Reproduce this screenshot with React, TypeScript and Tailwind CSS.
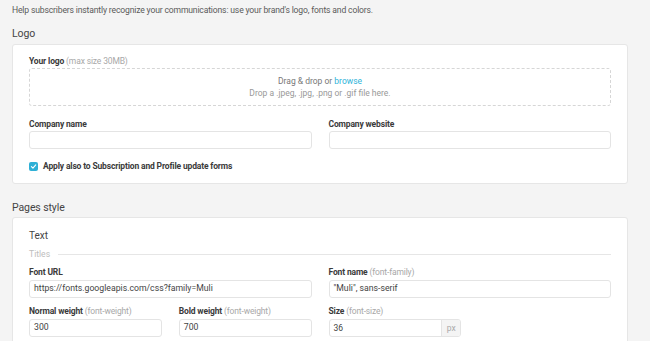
import React from "react";

const Label = ({ b, hint }: { b: string; hint?: string }) => (
  <div className="h-[10px] leading-[10px] text-[8.5px] tracking-[-0.15px] whitespace-nowrap">
    <span className="font-bold text-[#3a3a3a]">{b}</span>
    {hint && <span className="text-[#a8a8a8]"> {hint}</span>}
  </div>
);

const Input = ({ value, className = "" }: { value?: string; className?: string }) => (
  <div
    className={`h-[18px] border border-[#e4e4e4] rounded-[3px] bg-white flex items-center px-[4px] text-[8.7px] text-[#444] ${className}`}
  >
    {value}
  </div>
);

export default function App() {
  return (
    <div
      className="w-[650px] h-[341px] overflow-hidden bg-[#f4f4f4] pl-[12px] pr-[22px] pt-[4px]"
      style={{ fontFamily: "Roboto, 'Liberation Sans', sans-serif" }}
    >
      <p className="h-[12px] leading-[12px] text-[8.6px] tracking-[-0.16px] text-[#5a5a5a]">
        Help subscribers instantly recognize your communications: use your brand's logo, fonts and colors.
      </p>
      <h2 className="mt-[11px] h-[13px] leading-[13px] text-[10.5px] tracking-[-0.1px] text-[#444]">Logo</h2>
      <div className="mt-[4px] bg-white border border-[#e6e6e6] rounded-[3px] px-[16px] pt-[11px] pb-[12px]">
        <Label b="Your logo" hint="(max size 30MB)" />
        <div className="mt-[2px] h-[38px] border border-dashed border-[#d6d6d6] rounded-[3px] flex flex-col items-center justify-center text-[8.5px]">
          <div className="h-[12px] leading-[12px] text-[#777]">
            Drag &amp; drop or <span className="text-[#2eb3d9]">browse</span>
          </div>
          <div className="h-[12px] leading-[12px] text-[#999]">Drop a .jpeg, .jpg, .png or .gif file here.</div>
        </div>
        <div className="mt-[13px] grid grid-cols-2 gap-x-[17px]">
          <div>
            <Label b="Company name" />
            <Input className="mt-[2px]" />
          </div>
          <div>
            <Label b="Company website" />
            <Input className="mt-[2px]" />
          </div>
        </div>
        <div className="mt-[12px] h-[10px] flex items-center gap-[5px]">
          <div className="w-[9px] h-[9px] rounded-[2px] bg-[#2fb0d6] flex items-center justify-center">
            <svg width="7" height="7" viewBox="0 0 10 10">
              <path d="M2 5.2 L4.2 7.4 L8.2 2.8" stroke="white" strokeWidth="1.6" fill="none" strokeLinecap="round" strokeLinejoin="round" />
            </svg>
          </div>
          <span className="font-bold text-[8.5px] tracking-[-0.15px] text-[#3a3a3a]">Apply also to Subscription and Profile update forms</span>
        </div>
      </div>
      <h2 className="mt-[17px] h-[13px] leading-[13px] text-[10.5px] tracking-[-0.1px] text-[#444]">Pages style</h2>
      <div className="mt-[3px] bg-white border border-[#e6e6e6] rounded-[3px] px-[16px] pt-[11px] pb-[11px]">
        <div className="h-[13px] leading-[13px] text-[10px] text-[#444]">Text</div>
        <div className="mt-[7px] h-[10px] flex items-center gap-[8px]">
          <span className="text-[8.6px] text-[#bdbdbd]">Titles</span>
          <div className="flex-1 h-px bg-[#e6e6e6]" />
        </div>
        <div className="mt-[8px] grid grid-cols-2 gap-x-[17px]">
          <div>
            <Label b="Font URL" />
            <Input className="mt-[3px]" value="https://fonts.googleapis.com/css?family=Muli" />
          </div>
          <div>
            <Label b="Font name" hint="(font-family)" />
            <Input className="mt-[3px]" value={'"Muli", sans-serif'} />
          </div>
        </div>
        <div className="mt-[8px] grid grid-cols-4 gap-x-[17px]">
          <div>
            <Label b="Normal weight" hint="(font-weight)" />
            <Input className="mt-[3px]" value="300" />
          </div>
          <div>
            <Label b="Bold weight" hint="(font-weight)" />
            <Input className="mt-[3px]" value="700" />
          </div>
          <div>
            <Label b="Size" hint="(font-size)" />
            <div className="mt-[3px] h-[18px] border border-[#e4e4e4] rounded-[3px] bg-white flex text-[8.5px] overflow-hidden">
              <div className="flex-1 flex items-center px-[4px] text-[#444]">36</div>
              <div className="w-[19px] bg-[#f4f4f4] border-l border-[#e4e4e4] flex items-center justify-center text-[#aaa]">px</div>
            </div>
          </div>
        </div>
      </div>
    </div>
  );
}
